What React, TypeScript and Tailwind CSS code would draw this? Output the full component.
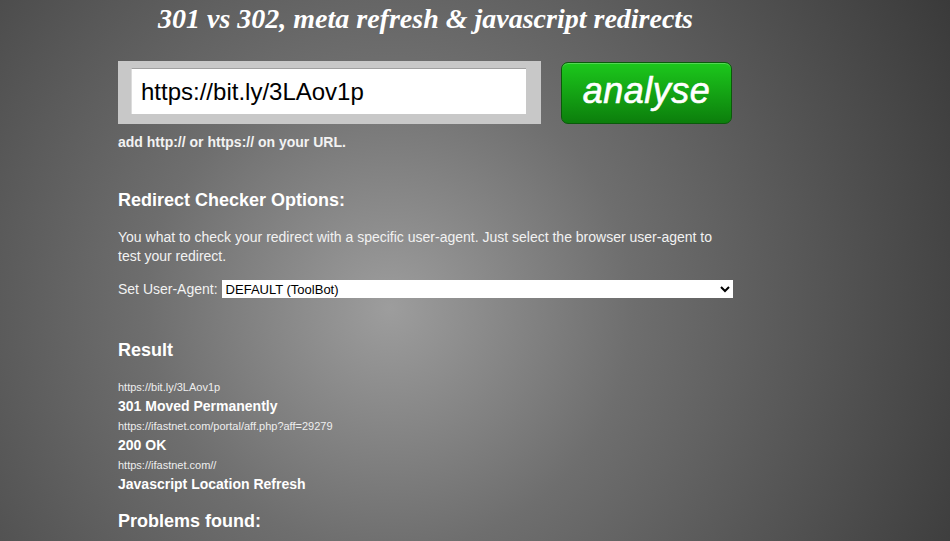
export default function App() {
  const hops = [
    { url: "https://bit.ly/3LAov1p", status: "301 Moved Permanently" },
    { url: "https://ifastnet.com/portal/aff.php?aff=29279", status: "200 OK" },
    { url: "https://ifastnet.com//", status: "Javascript Location Refresh" },
  ]

  return (
    <div className="min-h-screen bg-[radial-gradient(circle_at_41%_57%,#9d9d9d_0%,#6e6e6e_38%,#3a3a3a_100%)] text-white font-['Liberation_Sans',Arial,sans-serif]">
      <div className="w-[615px] ml-[118px]">
        {/* Title */}
        <h1 className="text-center font-['Liberation_Serif','Times_New_Roman',serif] italic font-bold text-[28px] leading-[38px]">
          301 vs 302, meta refresh &amp; javascript redirects
        </h1>

        {/* URL form */}
        <div className="flex items-start gap-5 mt-[23px]">
          <div className="w-[423px] h-[63px] bg-[#c8c8c8] pl-[13px] pr-[15px] pt-[7px]">
            <input
              defaultValue="https://bit.ly/3LAov1p"
              className="w-full h-[46px] bg-white border-t border-t-[#a0a0a0] border-l border-l-[#dcdcdc] px-[9px] text-[24px] text-black outline-none"
            />
          </div>
          <button className="w-[171px] h-[62px] mt-px rounded-[7px] border border-[#0a5a0a] bg-[linear-gradient(#1cc81c,#0c7e0c)] shadow-[inset_0_1px_0_rgba(255,255,255,0.25)] text-white italic text-[36px] tracking-[0.5px] leading-none pb-1 [-webkit-text-stroke:0.6px_white]">
            analyse
          </button>
        </div>
        <p className="text-sm font-bold text-[#f2f2f2] mt-[8px]">add http:// or https:// on your URL.</p>

        {/* Options */}
        <h2 className="text-lg font-bold mt-[34px]">Redirect Checker Options:</h2>
        <p className="text-sm leading-[19px] mt-[14px] text-[#f2f2f2]">
          You what to check your redirect with a specific user-agent. Just select the browser user-agent to test your
          redirect.
        </p>
        <div className="flex items-center gap-1 mt-[13px] text-sm text-[#f2f2f2]">
          <span>Set User-Agent:</span>
          <select className="flex-1 h-[18px] bg-white text-black text-[13px] leading-none">
            <option>DEFAULT (ToolBot)</option>
          </select>
        </div>

        {/* Result */}
        <h2 className="text-lg font-bold mt-[37px]">Result</h2>
        <div className="mt-[14px]">
          {hops.map((h) => (
            <div key={h.url}>
              <div className="text-[11px] leading-[18px] text-[#eeeeee]">{h.url}</div>
              <div className="text-sm font-bold leading-[21px]">{h.status}</div>
            </div>
          ))}
        </div>
        <h2 className="text-lg font-bold mt-[12px]">Problems found:</h2>
      </div>
    </div>
  )
}
